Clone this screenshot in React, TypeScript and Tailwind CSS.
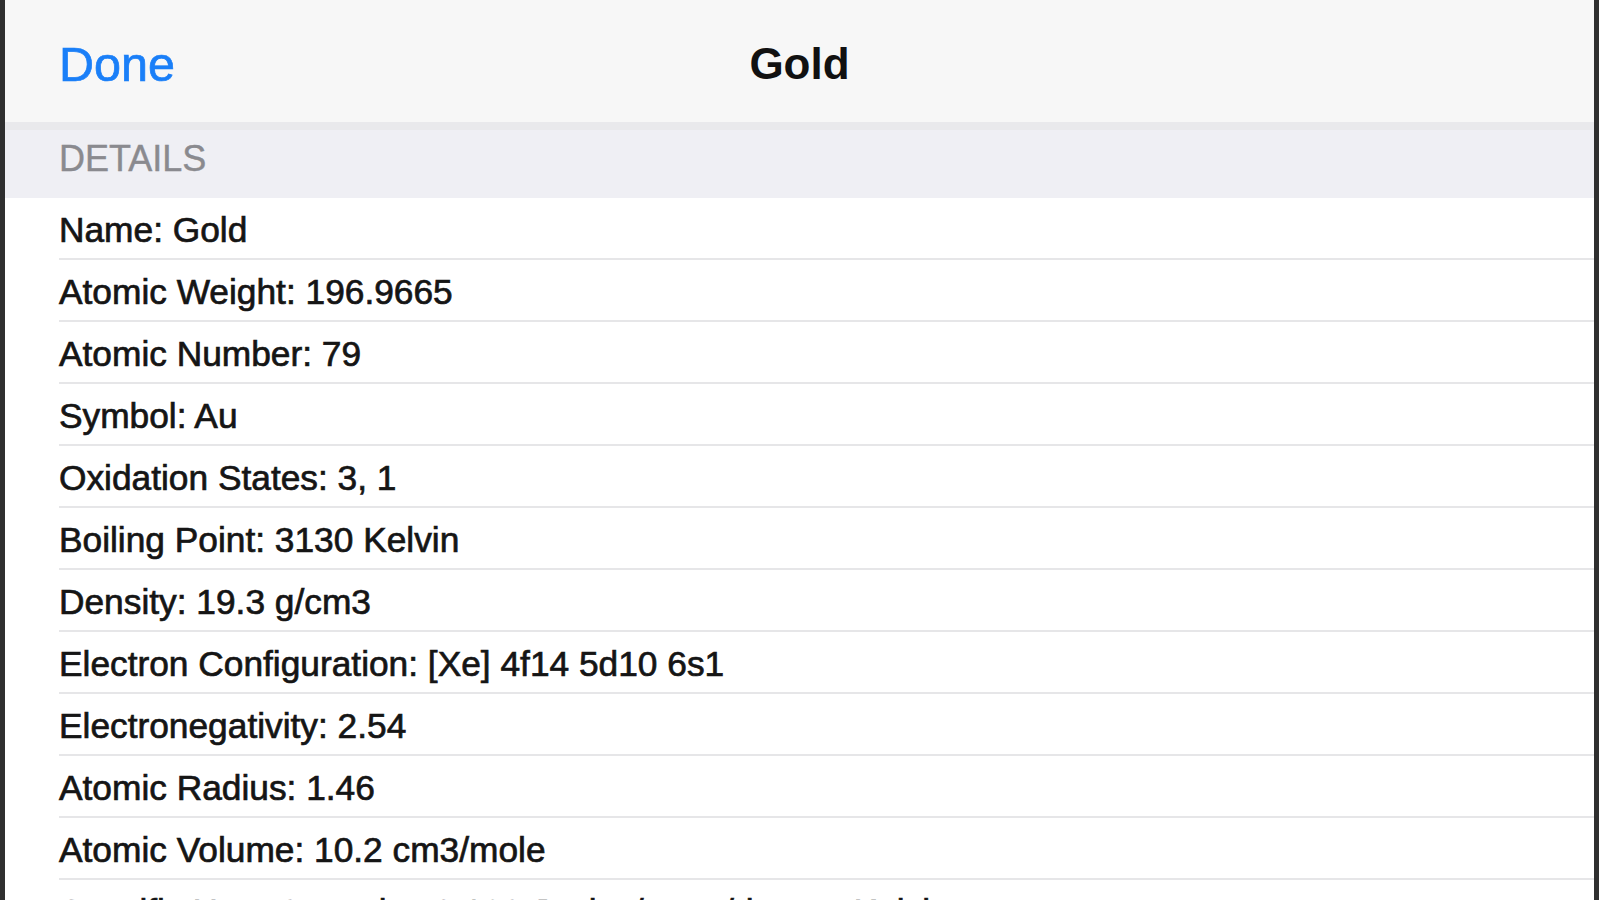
const rows = [
  "Name: Gold",
  "Atomic Weight: 196.9665",
  "Atomic Number: 79",
  "Symbol: Au",
  "Oxidation States: 3, 1",
  "Boiling Point: 3130 Kelvin",
  "Density: 19.3 g/cm3",
  "Electron Configuration: [Xe] 4f14 5d10 6s1",
  "Electronegativity: 2.54",
  "Atomic Radius: 1.46",
  "Atomic Volume: 10.2 cm3/mole",
  "Specific Heat Capacity: 0.129 Joules/gram/degree Kelvin",
];

export default function App() {
  return (
    <div className="flex h-[900px] w-full overflow-hidden bg-[#2f2f2f] px-[5px] font-['Liberation_Sans',Arial,sans-serif]">
      <div className="flex flex-1 flex-col overflow-hidden bg-white">
        <header className="relative flex h-[122px] shrink-0 items-center bg-[#f7f7f7] px-[54px] pt-[6px]">
          <button className="text-[48.5px] leading-none text-[#1a7ff8] [-webkit-text-stroke:0.7px_#1a7ff8]">
            Done
          </button>
          <h1 className="absolute left-1/2 -translate-x-1/2 text-[44px] font-bold leading-none text-[#111]">
            Gold
          </h1>
        </header>
        <div className="flex h-[76px] shrink-0 items-center border-t-[8px] border-[#e9e9ec] bg-[#efeff4] pb-[10px] pl-[54px] pr-[3px]">
          <span className="text-[36px] leading-none text-[#8a8a8f] [-webkit-text-stroke:0.4px_#8a8a8f]">
            DETAILS
          </span>
        </div>
        <ul className="flex flex-col pl-[54px]">
          {rows.map((r) => (
            <li
              key={r}
              className="flex h-[62px] shrink-0 items-center whitespace-nowrap border-b-2 border-[#e6e6e8] pr-[3px] pt-[4px] text-[35.3px] leading-none text-[#151515] [-webkit-text-stroke:0.7px_#151515]"
            >
              {r}
            </li>
          ))}
        </ul>
      </div>
    </div>
  );
}
